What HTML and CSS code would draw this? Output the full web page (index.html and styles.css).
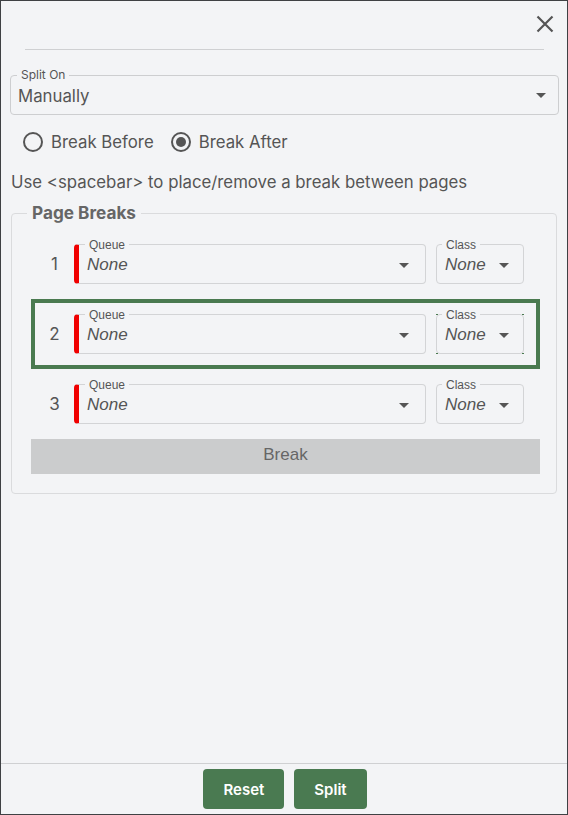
FILE: index.html
```html
<!DOCTYPE html>
<html>
<head>
<meta charset="utf-8">
<link rel="stylesheet" href="styles.css">
</head>
<body>
<div class="dialog">
  <div class="header">
    <button class="close" aria-label="Close">
      <svg width="18" height="18" viewBox="0 0 18 18"><path d="M1.5 1.5L16.5 16.5M16.5 1.5L1.5 16.5" stroke="#555" stroke-width="2.2" fill="none"/></svg>
    </button>
  </div>
  <div class="divider"></div>
  <div class="content">
    <div class="split-field">
      <span class="legend">Split On</span>
      <span class="value">Manually</span>
      <span class="caret"></span>
    </div>
    <div class="radios">
      <label class="radio"><span class="circle"></span>Break Before</label>
      <label class="radio"><span class="circle checked"></span>Break After</label>
    </div>
    <p class="hint">Use &lt;spacebar&gt; to place/remove a break between pages</p>
    <div class="breaks">
      <span class="breaks-legend">Page Breaks</span>
      <div class="row">
        <span class="num">1</span>
        <div class="field queue"><span class="flabel">Queue</span><span class="none">None</span><span class="caret"></span></div>
        <div class="field cls"><span class="flabel">Class</span><span class="none">None</span><span class="caret"></span></div>
      </div>
      <div class="row active">
        <span class="num">2</span>
        <div class="field queue"><span class="flabel">Queue</span><span class="none">None</span><span class="caret"></span></div>
        <div class="field cls focus"><span class="flabel">Class</span><span class="none">None</span><span class="caret"></span></div>
      </div>
      <div class="row">
        <span class="num">3</span>
        <div class="field queue"><span class="flabel">Queue</span><span class="none">None</span><span class="caret"></span></div>
        <div class="field cls"><span class="flabel">Class</span><span class="none">None</span><span class="caret"></span></div>
      </div>
      <button class="break-btn">Break</button>
    </div>
  </div>
  <div class="footer">
    <button class="btn">Reset</button>
    <button class="btn">Split</button>
  </div>
</div>
</body>
</html>
```
FILE: styles.css
```css
* { box-sizing: border-box; }
html, body { margin: 0; padding: 0; }
body {
  width: 568px;
  height: 815px;
  font-family: Inter, "Liberation Sans", sans-serif;
  color: #555;
}
.dialog {
  width: 568px;
  height: 815px;
  border: 1px solid #3f4144;
  background: #f3f4f6;
  display: flex;
  flex-direction: column;
}
.header {
  height: 48px;
  display: flex;
  justify-content: flex-end;
  align-items: flex-start;
  padding: 14px 13px 0 0;
}
.close {
  border: 0;
  background: none;
  padding: 0;
  width: 18px;
  height: 18px;
  cursor: pointer;
}
.close svg { display: block; }
.divider {
  height: 1px;
  background: #cfd0d2;
  margin: 0 23px 0 24px;
}
.content {
  flex: 1;
  padding: 25px 8px 0 9px;
}
.split-field {
  position: relative;
  height: 40px;
  border: 1px solid #cdced0;
  border-radius: 4px;
  display: flex;
  align-items: center;
  padding: 1px 12px 0 7px;
}
.legend {
  position: absolute;
  top: -8px;
  left: 6px;
  padding: 0 4px;
  background: #f3f4f6;
  font-size: 12px;
  line-height: 14px;
  color: #555;
}
.split-field .value {
  flex: 1;
  font-size: 16.8px;
  color: #555;
}
.caret {
  width: 0;
  height: 0;
  border-left: 5px solid transparent;
  border-right: 5px solid transparent;
  border-top: 5px solid #555;
}
.radios {
  display: flex;
  gap: 17px;
  margin: 17px 0 0 13px;
}
.radio {
  display: flex;
  align-items: center;
  gap: 8px;
  font-size: 16.8px;
  line-height: 20px;
  color: #555;
}
.circle {
  width: 20px;
  height: 20px;
  border: 2px solid #555;
  border-radius: 50%;
  display: flex;
  align-items: center;
  justify-content: center;
}
.circle.checked::after {
  content: "";
  width: 10px;
  height: 10px;
  border-radius: 50%;
  background: #555;
}
.hint {
  margin: 20px 0 0 1px;
  font-size: 16.8px;
  line-height: 20px;
  color: #555;
}
.breaks {
  position: relative;
  margin: 21px 2px 0 1px;
  border: 1px solid #dadbdd;
  border-radius: 4px;
  padding: 15px 16px 19px 19px;
}
.breaks-legend {
  position: absolute;
  top: -11px;
  left: 15px;
  padding: 0 5px;
  background: #f3f4f6;
  font-weight: 700;
  font-size: 17.2px;
  line-height: 20px;
  color: #666;
}
.row {
  height: 70px;
  border: 4px solid transparent;
  display: flex;
  align-items: center;
  padding-right: 12px;
}
.row.active { border-color: #4a7a50; }
.num {
  width: 39px;
  text-align: center;
  font-size: 17px;
  color: #555;
}
.field {
  position: relative;
  height: 40px;
  border: 1px solid #d3d4d6;
  border-radius: 4px;
  display: flex;
  align-items: center;
  padding: 2px 0 0 8px;
}
.field.queue {
  width: 352px;
  border-left: 5px solid #f00000;
  padding-left: 8px;
  padding-right: 16px;
}
.field.cls {
  width: 88px;
  margin-left: 10px;
  padding-left: 8px;
  padding-right: 14px;
}
.field.focus::before,
.field.focus::after {
  content: "";
  position: absolute;
  left: -1px;
  right: -1px;
  height: 1px;
  border-left: 2px solid #4a7a50;
  border-right: 2px solid #4a7a50;
}
.field.focus::before { top: -1px; }
.field.focus::after { bottom: -1px; }
.flabel {
  position: absolute;
  top: -7px;
  left: 5px;
  padding: 0 4px;
  background: #f3f4f6;
  font-family: "Liberation Sans", Arial, sans-serif;
  font-size: 12px;
  line-height: 14px;
  color: #555;
}
.field.queue .flabel { left: 6px; }
.none {
  flex: 1;
  font-family: "Liberation Sans", Arial, sans-serif;
  font-style: italic;
  font-size: 17px;
  color: #555;
}
.break-btn {
  display: block;
  width: 100%;
  height: 35px;
  margin-top: 0;
  border: 0;
  background: #cbcccd;
  font-family: "Liberation Sans", Arial, sans-serif;
  font-size: 17px;
  color: #666;
  padding: 0 0 4px;
}
.footer {
  border-top: 1px solid #cfd0d2;
  height: 51px;
  display: flex;
  justify-content: center;
  gap: 10px;
  padding-top: 5px;
  padding-left: 2px;
}
.btn {
  height: 40px;
  border: 0;
  border-radius: 4px;
  background: #4a7a51;
  color: #fff;
  font-family: Inter, "Liberation Sans", sans-serif;
  font-weight: 600;
  font-size: 15px;
  padding: 0 20px;
  min-width: 72px;
}
.btn:first-child { width: 81px; }
```
